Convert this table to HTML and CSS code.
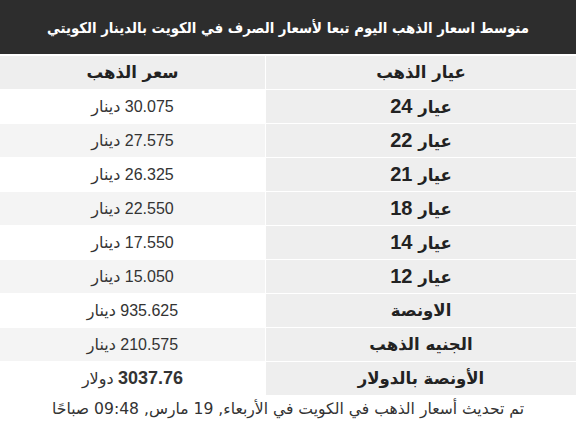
FILE: index.html
```html
<!DOCTYPE html>
<html lang="ar" dir="rtl">
<head>
<meta charset="utf-8">
<link rel="stylesheet" href="styles.css">
</head>
<body>
<div class="page">
  <div class="title">متوسط اسعار الذهب اليوم تبعا لأسعار الصرف في الكويت بالدينار الكويتي</div>
  <table class="prices">
    <tr class="head">
      <td class="k">عيار الذهب</td>
      <td class="v">سعر الذهب</td>
    </tr>
    <tr><td class="k">عيار <span class="num">24</span></td><td class="v">30.075 دينار</td></tr>
    <tr class="alt"><td class="k">عيار <span class="num">22</span></td><td class="v">27.575 دينار</td></tr>
    <tr><td class="k">عيار <span class="num">21</span></td><td class="v">26.325 دينار</td></tr>
    <tr class="alt"><td class="k">عيار <span class="num">18</span></td><td class="v">22.550 دينار</td></tr>
    <tr><td class="k">عيار <span class="num">14</span></td><td class="v">17.550 دينار</td></tr>
    <tr class="alt"><td class="k">عيار <span class="num">12</span></td><td class="v">15.050 دينار</td></tr>
    <tr><td class="k">الاونصة</td><td class="v">935.625 دينار</td></tr>
    <tr class="alt"><td class="k">الجنيه الذهب</td><td class="v">210.575 دينار</td></tr>
    <tr><td class="k">الأونصة بالدولار</td><td class="v"><b class="usd">3037.76</b> دولار</td></tr>
  </table>
  <div class="note">تم تحديث أسعار الذهب في الكويت في الأربعاء, 19 مارس, 09:48 صباحًا</div>
</div>
</body>
</html>
```
FILE: styles.css
```css
html, body {
  margin: 0;
  padding: 0;
  background: #fff;
}
body {
  font-family: "DejaVu Sans", "Liberation Sans", sans-serif;
  color: #333;
}
.page {
  width: 576px;
}
.title {
  height: 54px;
  background: #2d2d2d;
  color: #fff;
  font-family: "DejaVu Sans Condensed", "DejaVu Sans", sans-serif;
  font-weight: bold;
  font-size: 14.8px;
  white-space: nowrap;
  display: flex;
  align-items: center;
  justify-content: center;
}
.prices {
  width: 576px;
  margin-top: 1px;
  border-collapse: collapse;
}
.prices td {
  height: 33px;
  padding: 0;
  border-top: 1px solid #fff;
  text-align: center;
  vertical-align: middle;
}
.prices td.k {
  width: 310px;
  background: #eee;
  border-left: 1px solid #fff;
  font-weight: bold;
  font-size: 16.5px;
  color: #222;
}
.prices td.v {
  background: #fff;
  font-family: "Liberation Sans", "DejaVu Sans", sans-serif;
  font-size: 16px;
  color: #333;
}
.prices tr.alt td.v {
  background: #f4f4f4;
}
.prices tr.head td.v {
  background: #eee;
  font-family: "DejaVu Sans", sans-serif;
  font-weight: bold;
  font-size: 16.5px;
  color: #222;
}
.num {
  font-family: "Liberation Sans", sans-serif;
  font-size: 20px;
  font-weight: bold;
}
.usd {
  font-family: "Liberation Sans", sans-serif;
  font-size: 18px;
  font-weight: bold;
}
.note {
  text-align: center;
  font-size: 15.6px;
  line-height: 24px;
  padding-top: 2px;
  color: #333;
  white-space: nowrap;
}
```
